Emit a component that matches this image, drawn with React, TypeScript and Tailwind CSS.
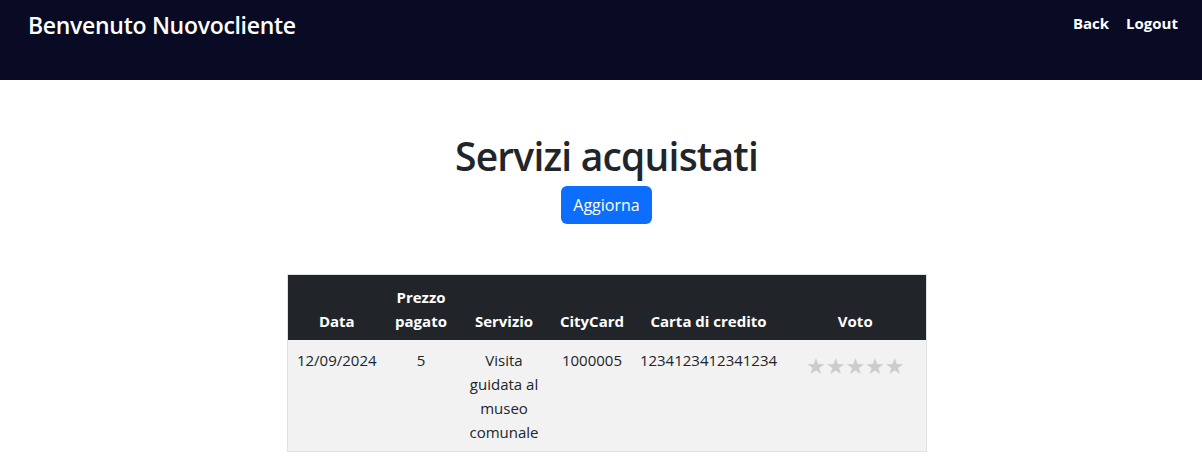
import React from "react";

const font = { fontFamily: '"Segoe UI", "Open Sans", "Noto Sans", sans-serif' };

export default function App() {
  return (
    <div className="min-h-[474px] bg-white text-[#212529]" style={font}>
      <header className="h-[80px] bg-[#090a23] flex items-start justify-between pl-[28px] pr-[24px]">
        <h2 className="text-[23px] font-semibold text-white mt-[10px] leading-[30px] tracking-[-0.3px]">Benvenuto Nuovocliente</h2>
        <nav className="flex gap-[17px] mt-[12px] text-[15px] font-bold text-white leading-[22px]">
          <span>Back</span>
          <span>Logout</span>
        </nav>
      </header>
      <main className="flex flex-col items-center pl-[11px]">
        <h1 className="mt-[52px] text-[39px] font-semibold leading-[48px] tracking-[-0.8px]">Servizi acquistati</h1>
        <button className="mt-[6px] h-[38px] px-[12px] rounded-[6px] bg-[#0d6efd] text-white text-[16px] leading-[24px]">Aggiorna</button>
        <table className="mt-[50px] w-[639px] table-fixed border-collapse border border-[#dee2e6] text-[15px] leading-[24px]">
          <colgroup>
            <col className="w-[99px]" />
            <col className="w-[70px]" />
            <col className="w-[96px]" />
            <col className="w-[80px]" />
            <col className="w-[153px]" />
            <col className="w-[141px]" />
          </colgroup>
          <thead>
            <tr className="bg-[#212529] text-white font-bold">
              <th className="px-[6px] pt-[10px] pb-[7px] align-bottom text-center">Data</th>
              <th className="px-[6px] pt-[10px] pb-[7px] align-bottom text-center">Prezzo pagato</th>
              <th className="px-[6px] pt-[10px] pb-[7px] align-bottom text-center">Servizio</th>
              <th className="px-[4px] pt-[10px] pb-[7px] align-bottom text-center">CityCard</th>
              <th className="px-[6px] pt-[10px] pb-[7px] align-bottom text-center">Carta di credito</th>
              <th className="px-[6px] pt-[10px] pb-[7px] align-bottom text-center">Voto</th>
            </tr>
          </thead>
          <tbody>
            <tr className="bg-[#f2f2f2] text-[#212529]">
              <td className="px-[4px] pt-[8px] pb-[7px] align-top text-center">12/09/2024</td>
              <td className="px-[6px] pt-[8px] pb-[7px] align-top text-center">5</td>
              <td className="px-[8px] pt-[8px] pb-[7px] align-top text-center">Visita guidata al museo comunale</td>
              <td className="px-[4px] pt-[8px] pb-[7px] align-top text-center">1000005</td>
              <td className="px-[2px] pt-[8px] pb-[7px] align-top text-center">1234123412341234</td>
              <td className="px-[6px] pt-[8px] pb-[7px] align-top text-center">
                <div className="flex justify-center mt-[7px] text-[#cccccc] text-[22px] leading-[24px]" style={{ fontFamily: '"DejaVu Sans", sans-serif' }}>
                  <span>★</span><span>★</span><span>★</span><span>★</span><span>★</span>
                </div>
              </td>
            </tr>
          </tbody>
        </table>
      </main>
    </div>
  );
}
